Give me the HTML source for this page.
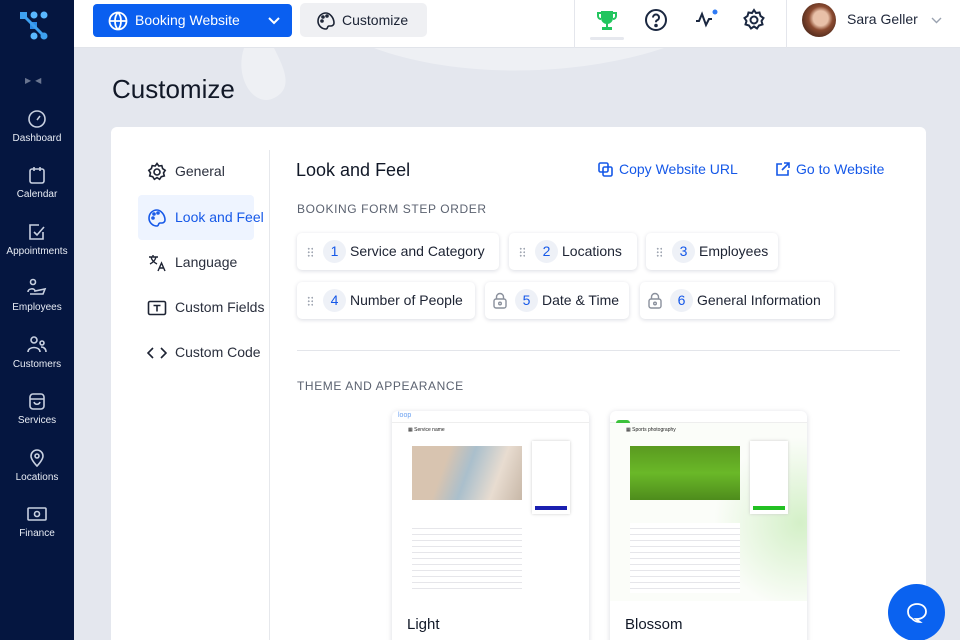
<!DOCTYPE html>
<html style="width:960px;height:640px;overflow:hidden"><head><meta charset="utf-8"><style>
*{box-sizing:border-box;margin:0;padding:0}
body{width:960px;height:640px;overflow:hidden;font-family:"Liberation Sans",sans-serif;background:#e4e7ee;position:relative;color:#1a2233}
.side{position:absolute;left:0;top:0;width:74px;height:640px;background:#051640}
.nav{position:absolute;left:0;width:74px;text-align:center;color:#e8ecf4;font-size:10px}
.nav svg{display:block;margin:0 auto 4px}
.top{position:absolute;left:74px;top:0;right:0;height:48px;background:#fff;border-bottom:1px solid #e1e4ea}
.btn1{position:absolute;left:19px;top:4px;width:199px;height:33px;background:#0a5ff0;border-radius:4px;color:#fff;font-size:14px;line-height:33px;padding-left:42px}
.btn2{position:absolute;left:226px;top:3px;width:127px;height:34px;background:#eff0f3;border-radius:5px;font-size:14px;line-height:34px;padding-left:42px}
.card{position:absolute;left:111px;top:127px;width:815px;height:513px;background:#fff;border-radius:6px 6px 0 0;overflow:hidden}
.mi{position:absolute;left:27px;height:45px;width:116px;font-size:14px;line-height:45px;padding-left:37px;color:#2a2f3d;white-space:nowrap}
.mi svg{position:absolute;left:9px;top:13px}
.chip{position:absolute;height:37px;border-radius:5px;background:#fff;box-shadow:0 1px 4px rgba(0,20,60,.15);font-size:14px;line-height:37px;color:#1d2333;white-space:nowrap}
.chip .n{position:absolute;top:7px;width:23px;height:23px;border-radius:50%;background:#eef1f7;color:#1558e8;text-align:center;line-height:23px;font-size:14px}
.dots{position:absolute;left:10px;top:14px;width:6px;height:10px;background-image:radial-gradient(#a0a6b2 0.9px,transparent 1.1px);background-size:3.5px 3.5px}
.th{position:absolute;top:284px;width:197px;height:240px;border-radius:6px;background:#fff;box-shadow:0 1px 6px rgba(0,20,60,.15);overflow:hidden}
.h3{font-size:12px;letter-spacing:.6px;color:#5b6270;position:absolute}
</style></head><body>
<div class="side">
 <svg style="position:absolute;left:20px;top:10px" width="30" height="32"><rect x="0" y="2" width="7" height="7" fill="#3da0f0"/><circle cx="14" cy="5" r="3.5" fill="#5ab8ff"/><circle cx="24" cy="5" r="3.5" fill="#5ab8ff"/><rect x="10" y="12" width="7" height="7" fill="#2a8ae8"/><circle cx="14" cy="26" r="3.5" fill="#5ab8ff"/><circle cx="24" cy="26" r="3.5" fill="#3da0f0"/><path d="M4 6 L13 15 L23 25" stroke="#3da0f0" stroke-width="3" fill="none"/></svg>
 <div style="position:absolute;left:25px;top:76px;color:#6a7590;font-size:8px;letter-spacing:4px">▶◀</div>
 <div class="nav" style="top:109px"><svg width="20" height="20" fill="none" stroke="#c8d0e0" stroke-width="1.6"><circle cx="10" cy="10" r="8"/><path d="M10 11l3-4"/></svg>Dashboard</div>
 <div class="nav" style="top:165px"><svg width="20" height="20" fill="none" stroke="#c8d0e0" stroke-width="1.6"><rect x="3" y="4" width="14" height="14" rx="2"/><path d="M7 2v4M13 2v4"/></svg>Calendar</div>
 <div class="nav" style="top:222px"><svg width="20" height="20" fill="none" stroke="#c8d0e0" stroke-width="1.6"><path d="M16 10v7H3V3h9"/><path d="M7 10l3 3 7-8"/></svg>Appointments</div>
 <div class="nav" style="top:278px"><svg width="22" height="20" fill="none" stroke="#c8d0e0" stroke-width="1.6"><circle cx="7" cy="4" r="2.5"/><path d="M2 14c0-4 7-4 7-1l10-2-2 5H4"/></svg>Employees</div>
 <div class="nav" style="top:335px"><svg width="22" height="20" fill="none" stroke="#c8d0e0" stroke-width="1.6"><circle cx="8" cy="5" r="3"/><circle cx="16" cy="8" r="2"/><path d="M2 17c0-6 12-6 12 0M15 12c3 0 5 2 5 5"/></svg>Customers</div>
 <div class="nav" style="top:391px"><svg width="20" height="20" fill="none" stroke="#c8d0e0" stroke-width="1.6"><rect x="3" y="3" width="14" height="15" rx="3"/><path d="M3 8h14M7 11c1 3 5 3 6 0"/></svg>Services</div>
 <div class="nav" style="top:448px"><svg width="20" height="20" fill="none" stroke="#c8d0e0" stroke-width="1.6"><path d="M10 18s6-6 6-10a6 6 0 0 0-12 0c0 4 6 10 6 10z"/><circle cx="10" cy="8" r="2"/></svg>Locations</div>
 <div class="nav" style="top:504px"><svg width="22" height="20" fill="none" stroke="#c8d0e0" stroke-width="1.6"><rect x="2" y="4" width="18" height="12" rx="1"/><circle cx="11" cy="10" r="2.5"/></svg>Finance</div>
</div>
<svg style="position:absolute;left:74px;top:48px" width="886" height="200"><path d="M170 0c-10 30 10 60 30 50s10-30 0-50z" fill="#eef0f4"/><path d="M300 0c80 30 200 30 290 0z" fill="#eef0f4"/></svg>
<div class="top">
 <div class="btn1"><svg style="position:absolute;left:15px;top:7px" width="20" height="20" fill="none" stroke="#fff" stroke-width="1.8"><circle cx="10" cy="10" r="8.5"/><path d="M1.5 10h17M10 1.5c-4 4-4 13 0 17M10 1.5c4 4 4 13 0 17"/></svg><span>Booking Website</span><svg style="position:absolute;left:175px;top:13px" width="12" height="8" fill="none" stroke="#fff" stroke-width="2"><path d="M1 1l5 5 5-5"/></svg></div>
 <div class="btn2"><svg style="position:absolute;left:16px;top:8px" width="20" height="20" fill="none" stroke="#1a2233" stroke-width="1.6"><path d="M10 2a8 8 0 1 0 0 16c2 0 1-3 3-3h2a3 3 0 0 0 3-3c0-5-4-10-8-10z"/><circle cx="6" cy="10" r="1"/><circle cx="7" cy="6" r="1"/><circle cx="11" cy="5" r="1"/></svg>Customize</div>
 <div style="position:absolute;left:500px;top:0;width:1px;height:48px;background:#e4e6ec"></div>
 <svg style="position:absolute;left:522px;top:9px" width="22" height="22" fill="#22c55e"><path d="M5 2h12v7a6 6 0 0 1-12 0z"/><path d="M5 4H2v3a3 3 0 0 0 3 3M17 4h3v3a3 3 0 0 1-3 3" fill="none" stroke="#22c55e" stroke-width="2"/><rect x="10" y="14" width="2" height="4"/><rect x="6" y="18" width="10" height="3"/></svg>
 <div style="position:absolute;left:516px;top:37px;width:34px;height:3px;background:#e6e8ee;border-radius:2px"></div>
 <svg style="position:absolute;left:570px;top:8px" width="24" height="24" fill="none" stroke="#1a2740" stroke-width="2"><circle cx="12" cy="12" r="10"/><path d="M9 9.5a3 3 0 1 1 4 2.8c-1 .4-1 1-1 2"/><circle cx="12" cy="17.5" r=".8" fill="#1a2740"/></svg>
 <svg style="position:absolute;left:620px;top:8px" width="26" height="24" fill="none" stroke="#1a2740" stroke-width="2"><path d="M2 13h3l3-7 4 11 3-6h3"/><circle cx="21" cy="4" r="2.5" fill="#2f7bf5" stroke="none"/></svg>
 <svg style="position:absolute;left:668px;top:8px" width="24" height="24" fill="none" stroke="#1a2740" stroke-width="2"><path d="M12 2l2 3 3.5-.5 1 3.5 3 2-2 3 1 3.5-3.5 1-2 3-3-2-3 2-2-3-3.5-1 1-3.5-2-3 3-2 1-3.5L10 5z"/><circle cx="12" cy="12" r="3.5"/></svg>
 <div style="position:absolute;left:712px;top:0;width:1px;height:48px;background:#e4e6ec"></div>
 <div style="position:absolute;left:728px;top:3px;width:34px;height:34px;border-radius:50%;background:radial-gradient(circle at 55% 45%,#e8c0a8 0 28%,#8a4a30 45%,#5a3020 70%,#c9a590)"></div>
 <div style="position:absolute;left:773px;top:11px;font-size:14px;color:#1d2538">Sara Geller</div>
 <svg style="position:absolute;left:857px;top:17px" width="11" height="7" fill="none" stroke="#9aa2b0" stroke-width="1.4"><path d="M1 1l4.5 4.5L10 1"/></svg>
</div>
<div style="position:absolute;left:112px;top:74px;font-size:26px;color:#111827">Customize</div>
<div class="card">
 <div style="position:absolute;left:158px;top:23px;width:1px;height:500px;background:#e6e8ec"></div>
 <div class="mi" style="top:22px"><svg width="20" height="20" fill="none" stroke="#1d2333" stroke-width="1.6"><path d="M10 1.5l1.8 2.5 3-.4.8 3 2.6 1.7-1.7 2.6.8 3-3 .8-1.7 2.6-2.6-1.7-2.6 1.7-1.7-2.6-3-.8.8-3L1.8 8.3l2.6-1.7.8-3 3 .4z"/><circle cx="10" cy="10" r="3"/></svg>General</div>
 <div class="mi" style="top:68px;background:#eef4ff;color:#1558e8;border-radius:4px"><svg width="20" height="20" fill="none" stroke="#1558e8" stroke-width="1.6"><path d="M10 2a8 8 0 1 0 0 16c2 0 1-3 3-3h2a3 3 0 0 0 3-3c0-5-4-10-8-10z"/><circle cx="6" cy="10" r="1"/><circle cx="7" cy="6" r="1"/><circle cx="11" cy="5" r="1"/></svg>Look and Feel</div>
 <div class="mi" style="top:113px"><svg width="20" height="20" fill="none" stroke="#1d2333" stroke-width="1.4"><path d="M2 4h9M6 2v2M4 4c1 4 4 6 6 7M9 4c-1 4-4 6-6 7M11 18l3.5-8 3.5 8M12.3 15h4.4"/></svg>Language</div>
 <div class="mi" style="top:158px"><svg width="20" height="20" fill="none" stroke="#1d2333" stroke-width="1.6"><rect x="1.5" y="3.5" width="17" height="13" rx="1.5"/><path d="M6.5 7.5h7M10 7.5v6"/></svg>Custom Fields</div>
 <div class="mi" style="top:203px"><svg width="20" height="20" fill="none" stroke="#1d2333" stroke-width="1.6"><path d="M6 5l-5 5 5 5M14 5l5 5-5 5"/></svg>Custom Code</div>
 <div style="position:absolute;left:185px;top:33px;font-size:18px;color:#111827">Look and Feel</div>
 <div style="position:absolute;left:487px;top:34px;font-size:14px;color:#1558e8"><svg style="vertical-align:-3px;margin-right:6px" width="15" height="15" fill="none" stroke="#1558e8" stroke-width="1.6"><rect x="1" y="1" width="9" height="9" rx="1.5"/><rect x="5" y="5" width="9" height="9" rx="1.5"/></svg>Copy Website URL</div>
 <div style="position:absolute;left:664px;top:34px;font-size:14px;color:#1558e8"><svg style="vertical-align:-3px;margin-right:6px" width="15" height="15" fill="none" stroke="#1558e8" stroke-width="1.6"><path d="M7 2H2v11h11V8M9 1h5v5M14 1L7 8"/></svg>Go to Website</div>
 <div class="h3" style="left:186px;top:75px">BOOKING FORM STEP ORDER</div>
 <div class="chip" style="left:186px;top:106px;width:202px"><span class="dots"></span><span class="n" style="left:26px">1</span><span style="position:absolute;left:53px">Service and Category</span></div>
 <div class="chip" style="left:398px;top:106px;width:128px"><span class="dots"></span><span class="n" style="left:26px">2</span><span style="position:absolute;left:53px">Locations</span></div>
 <div class="chip" style="left:535px;top:106px;width:132px"><span class="dots"></span><span class="n" style="left:26px">3</span><span style="position:absolute;left:53px">Employees</span></div>
 <div class="chip" style="left:186px;top:155px;width:178px"><span class="dots"></span><span class="n" style="left:26px">4</span><span style="position:absolute;left:53px">Number of People</span></div>
 <div class="chip" style="left:374px;top:155px;width:144px"><svg style="position:absolute;left:8px;top:10px" width="14" height="17" fill="none" stroke="#8a909c" stroke-width="1.4"><rect x="1" y="7" width="12" height="9" rx="2"/><path d="M3.5 7V5a3.5 3.5 0 0 1 7 0v2"/><circle cx="7" cy="11.5" r="1.3"/></svg><span class="n" style="left:30px">5</span><span style="position:absolute;left:57px">Date &amp; Time</span></div>
 <div class="chip" style="left:529px;top:155px;width:194px"><svg style="position:absolute;left:8px;top:10px" width="14" height="17" fill="none" stroke="#8a909c" stroke-width="1.4"><rect x="1" y="7" width="12" height="9" rx="2"/><path d="M3.5 7V5a3.5 3.5 0 0 1 7 0v2"/><circle cx="7" cy="11.5" r="1.3"/></svg><span class="n" style="left:30px">6</span><span style="position:absolute;left:57px">General Information</span></div>
 <div style="position:absolute;left:186px;top:223px;width:603px;height:1px;background:#e3e5ea"></div>
 <div class="h3" style="left:186px;top:252px">THEME AND APPEARANCE</div>
 <div class="th" style="left:281px">
  <div style="height:12px;border-bottom:1px solid #eee;font-size:7px;color:#6aa0f0;padding:1px 6px">loop</div>
  <div style="position:absolute;left:16px;top:16px;font-size:5px;color:#222">▦ Service name</div>
  <div style="position:absolute;left:20px;top:35px;width:110px;height:54px;background:linear-gradient(110deg,#d8c4b0 0 30%,#aabfcc 50%,#e8dcd0 75%,#c8b8a8)"></div>
  <div style="position:absolute;left:140px;top:30px;width:38px;height:73px;box-shadow:0 0 3px #ccc"><div style="position:absolute;left:3px;bottom:4px;width:32px;height:4px;background:#1a1fb0"></div></div>
  <div style="position:absolute;left:20px;top:112px;width:110px;height:70px;background:repeating-linear-gradient(#fff 0 5px,#e6e6ea 5px 6px)"></div>
  <div style="position:absolute;left:15px;top:205px;font-size:15px;color:#111827">Light</div>
 </div>
 <div class="th" style="left:499px">
  <div style="height:12px;border-bottom:1px solid #eee;padding:2px 6px"><span style="display:inline-block;width:14px;height:6px;background:#3bc23b;border-radius:3px"></span></div>
  <div style="position:absolute;left:0;top:12px;width:197px;height:178px;background:radial-gradient(circle at 190px 100px,#d4f0c8,transparent 40%),#fbfdf9"></div>
  <div style="position:absolute;left:16px;top:16px;font-size:5px;color:#222">▦ Sports photography</div>
  <div style="position:absolute;left:20px;top:35px;width:110px;height:54px;background:linear-gradient(#5a9a20,#6ab828 50%,#4e8c1c)"></div>
  <div style="position:absolute;left:140px;top:30px;width:38px;height:73px;background:#fff;box-shadow:0 0 3px #ccc"><div style="position:absolute;left:3px;bottom:4px;width:32px;height:4px;background:#22c022"></div></div>
  <div style="position:absolute;left:20px;top:112px;width:110px;height:70px;background:repeating-linear-gradient(#fff 0 5px,#e6e6ea 5px 6px)"></div>
  <div style="position:absolute;left:15px;top:205px;font-size:15px;color:#111827">Blossom</div>
 </div>
</div>
<div style="position:absolute;left:888px;top:584px;width:57px;height:57px;border-radius:50%;background:#0a62f0"><svg style="position:absolute;left:17px;top:17px" width="24" height="24" fill="none" stroke="#fff" stroke-width="1.8"><path d="M12 3c5 0 9 3 9 7.5S17 18 12 18h-1l4 3c-3 0-6-1-8-3.5C4 16 3 13.5 3 10.5 3 6 7 3 12 3z"/></svg></div>
</body></html>
